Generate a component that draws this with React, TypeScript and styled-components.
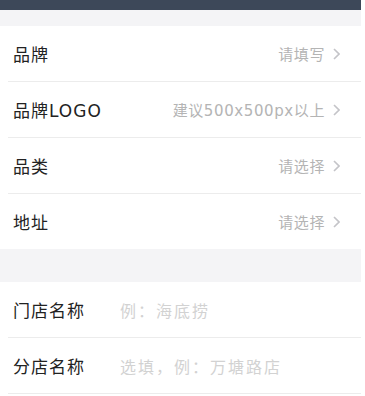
import * as React from 'react';
import styled, { createGlobalStyle } from 'styled-components';

const GlobalStyle = createGlobalStyle`
  body {
    margin: 0;
    background: #fff;
    font-family: "DejaVu Sans", "Noto Sans CJK SC", sans-serif;
  }
`;

const Page = styled.div`
  width: 361px;
  display: flex;
  flex-direction: column;
`;

const TopBar = styled.div`
  height: 10px;
  background: #3d4859;
`;

const Spacer = styled.div<{ $h: number }>`
  height: ${(p) => p.$h}px;
  background: #f4f4f6;
`;

const Group = styled.div`
  background: #fff;
  padding-left: 8px;
`;

const Row = styled.div<{ $last?: boolean }>`
  height: 55px;
  display: flex;
  align-items: center;
  padding: 0 21px 0 5px;
  border-bottom: ${(p) => (p.$last ? 'none' : '1px solid #ececec')};
`;

const Label = styled.div<{ $wide?: boolean }>`
  font-size: 17px;
  color: #222;
  letter-spacing: 1px;
  width: ${(p) => (p.$wide ? '107px' : 'auto')};
  flex-shrink: 0;
`;

const Value = styled.div`
  margin-left: auto;
  display: flex;
  align-items: center;
  gap: 8px;
  font-size: 15px;
  color: #b4b4b4;
  letter-spacing: 0.6px;
`;

const Placeholder = styled.div`
  font-size: 16px;
  color: #d2d2d2;
  letter-spacing: 2px;
`;

const Chevron = () => (
  <svg width="7" height="12" viewBox="0 0 7 12">
    <path d="M1 1l5 5-5 5" fill="none" stroke="#c4c4c8" strokeWidth="1.6" />
  </svg>
);

const selects = [
  { label: '品牌', value: '请填写' },
  { label: '品牌LOGO', value: '建议500x500px以上' },
  { label: '品类', value: '请选择' },
  { label: '地址', value: '请选择' },
];

const inputs = [
  { label: '门店名称', hint: '例：海底捞' },
  { label: '分店名称', hint: '选填，例：万塘路店' },
];

const App: React.FC = () => (
  <>
    <GlobalStyle />
    <Page>
      <TopBar />
      <Spacer $h={16} />
      <Group>
        {selects.map((item, i) => (
          <Row key={item.label} $last={i === selects.length - 1}>
            <Label>{item.label}</Label>
            <Value>
              {item.value}
              <Chevron />
            </Value>
          </Row>
        ))}
      </Group>
      <Spacer $h={33} />
      <Group>
        {inputs.map((item) => (
          <Row key={item.label}>
            <Label $wide>{item.label}</Label>
            <Placeholder>{item.hint}</Placeholder>
          </Row>
        ))}
      </Group>
    </Page>
  </>
);

export default App;
